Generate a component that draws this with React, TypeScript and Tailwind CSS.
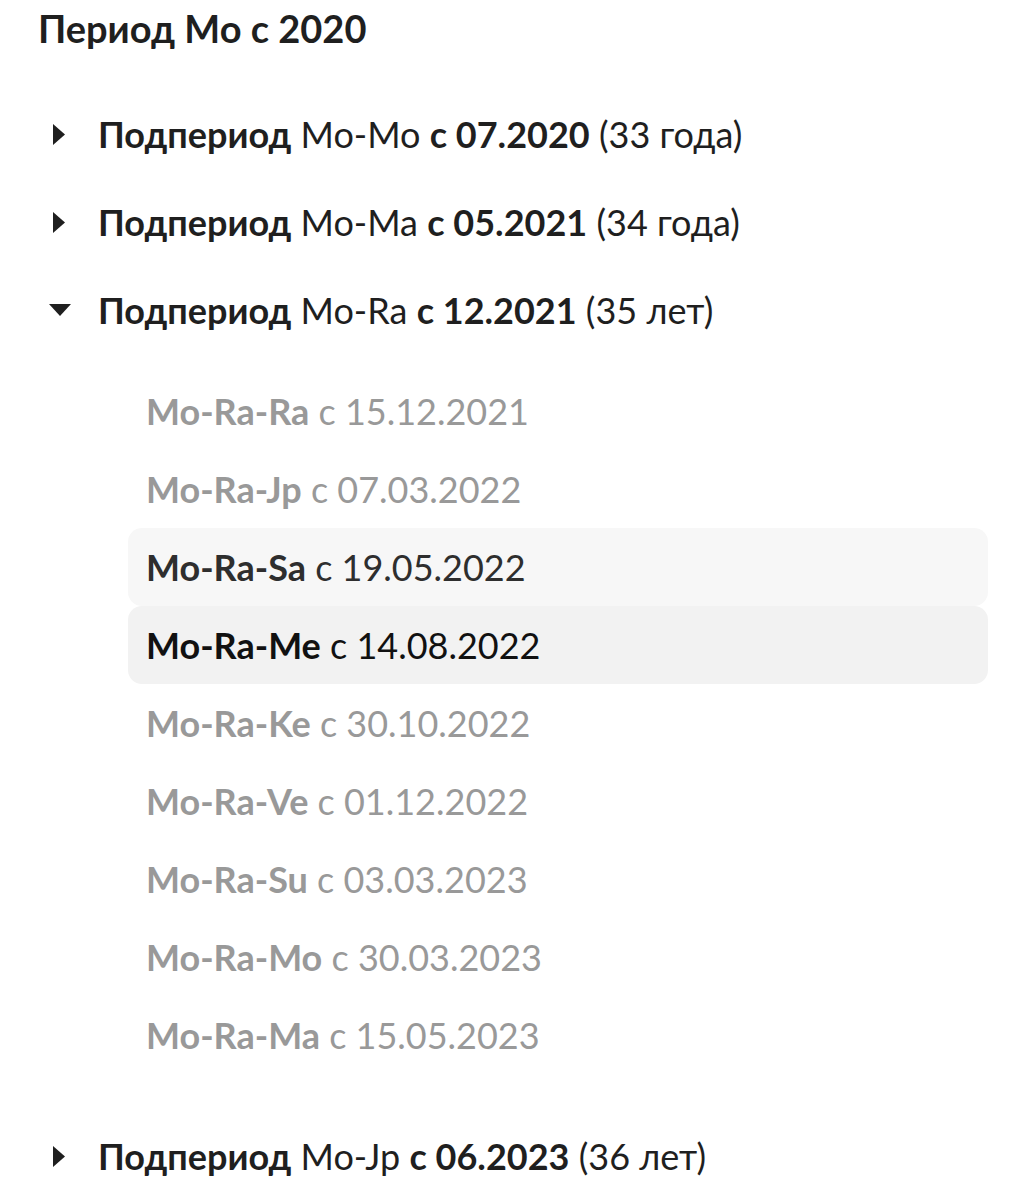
import { ReactNode } from 'react'

type Sub = { name: string; date: string; state?: 'hover' | 'active' }

const SUBPERIODS_BEFORE = [
  { name: 'Mo-Mo', date: '07.2020', age: '33 года' },
  { name: 'Mo-Ma', date: '05.2021', age: '34 года' },
]

const ITEMS: Sub[] = [
  { name: 'Mo-Ra-Ra', date: '15.12.2021' },
  { name: 'Mo-Ra-Jp', date: '07.03.2022' },
  { name: 'Mo-Ra-Sa', date: '19.05.2022', state: 'hover' },
  { name: 'Mo-Ra-Me', date: '14.08.2022', state: 'active' },
  { name: 'Mo-Ra-Ke', date: '30.10.2022' },
  { name: 'Mo-Ra-Ve', date: '01.12.2022' },
  { name: 'Mo-Ra-Su', date: '03.03.2023' },
  { name: 'Mo-Ra-Mo', date: '30.03.2023' },
  { name: 'Mo-Ra-Ma', date: '15.05.2023' },
]

function Caret({ open }: { open?: boolean }) {
  return (
    <div className="w-[98px] shrink-0 flex items-center">
      {open ? (
        <svg width="22" height="12" viewBox="0 0 22 12" className="ml-[49px] shrink-0">
          <path d="M0 0 H22 L11 12 Z" fill="#1f1f1f" />
        </svg>
      ) : (
        <svg width="12" height="21" viewBox="0 0 12 21" className="ml-[53px] shrink-0">
          <path d="M0 0 L12 10.5 L0 21 Z" fill="#1f1f1f" />
        </svg>
      )}
    </div>
  )
}

function SubperiodRow({ name, date, age, open }: { name: string; date: string; age: string; open?: boolean }) {
  return (
    <div className="h-[88px] flex items-center text-[36px] text-[#1f1f1f]">
      <Caret open={open} />
      <span>
        <b className="font-bold">Подпериод</b> {name} <b className="font-bold">с {date}</b> ({age})
      </span>
    </div>
  )
}

function ItemRow({ item }: { item: Sub }) {
  let cls = 'text-[#999999]'
  if (item.state === 'hover') cls = 'bg-[#f7f7f7] text-[#2e2e2e]'
  if (item.state === 'active') cls = 'bg-[#f2f2f2] text-[#111111]'
  return (
    <div className={`h-[78px] flex items-center px-[18px] rounded-[14px] ${cls}`}>
      <span>
        <b className="font-bold">{item.name}</b> с {item.date}
      </span>
    </div>
  )
}

function Section({ children }: { children: ReactNode }) {
  return <div className="ml-[128px] w-[860px] mt-[18px] mb-[38px] text-[36px]">{children}</div>
}

export default function App() {
  return (
    <div className="bg-white w-[1023px] h-[1200px] overflow-hidden" style={{ fontFamily: 'Lato, "Noto Sans", sans-serif' }}>
      <h1 className="h-[90px] pl-[38px] pt-[4px] text-[38px] font-bold text-[#1f1f1f] leading-[48px]">Период Mo с 2020</h1>
      {SUBPERIODS_BEFORE.map(s => (
        <SubperiodRow key={s.name} {...s} />
      ))}
      <SubperiodRow name="Mo-Ra" date="12.2021" age="35 лет" open />
      <Section>
        {ITEMS.map(i => (
          <ItemRow key={i.name} item={i} />
        ))}
      </Section>
      <SubperiodRow name="Mo-Jp" date="06.2023" age="36 лет" />
    </div>
  )
}
